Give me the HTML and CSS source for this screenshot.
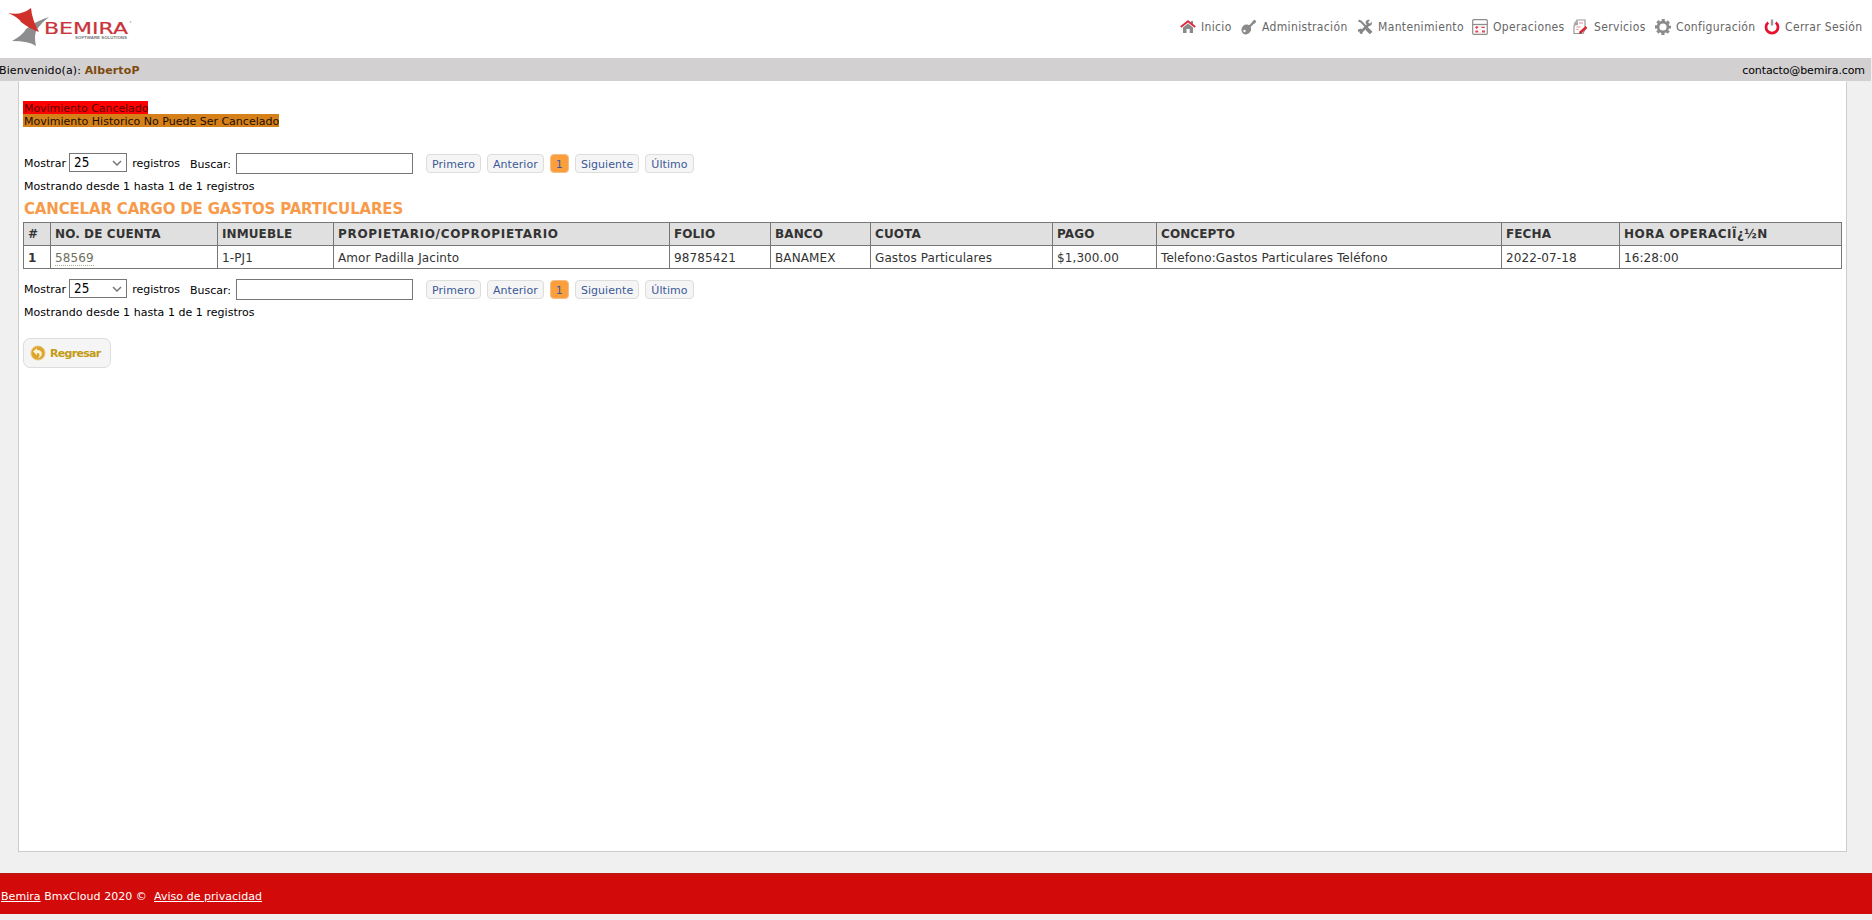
FILE: index.html
```
<!DOCTYPE html>
<html lang="es">
<head>
    <meta charset="UTF-8">
    <meta name="viewport" content="width=device-width, initial-scale=1.0">
    <title>Cancelar Cargo de Gastos Particulares</title>
    <link rel="stylesheet" href="styles.css">
</head>
<body>
    <header class="header">
        <svg class="logo" width="136" height="50" viewBox="0 0 136 50">
            <path d="M12 41 Q23 35 26 29 Q36 21 49 17 Q40 24 36 31 Q34 38 36 46 Q29 41 12 41Z" fill="#8d8d8f"/>
            <path d="M8 13 Q21 16 31 8 Q32 20 39 32 Q30 29 21 22 Q18 17 8 13Z" fill="#cf3029"/>
            <text class="logo-name" x="44" y="34" textLength="84" lengthAdjust="spacingAndGlyphs">BEMIRA</text>
            <text class="logo-sub" x="75" y="39" textLength="52" lengthAdjust="spacingAndGlyphs">SOFTWARE SOLUTIONS</text>
            <circle cx="130.500" cy="22" r="0.800" fill="#aaa"/>
        </svg>
        <nav class="menu">
            <a><svg viewBox="0 0 16 16"><path d="M3 8.500 8 4.500 13 8.500V14H9.700V10H6.500V14H3Z" fill="#8a8a8a"/><path d="M11 2h2v4h-2z" fill="#8a8a8a"/><path d="M.8 8 8 2.200 15.200 8" fill="none" stroke="#e0283c" stroke-width="1.900"/></svg><span>Inicio</span></a>
            <a><svg viewBox="0 0 16 16"><path d="M7 9 14.500 1.500" stroke="#8a8a8a" stroke-width="2.400"/><path d="M11 3h4M13 1v4" stroke="#8a8a8a" stroke-width="1"/><ellipse cx="5.200" cy="10.300" rx="4.600" ry="5.200" transform="rotate(35 5 10.500)" fill="#8a8a8a"/><circle cx="3.500" cy="12" r="1.200" fill="#fff"/></svg><span>Administración</span></a>
            <a><svg viewBox="0 0 16 16"><path d="M1.500 1.500 4 2.500 14.500 13.500" fill="none" stroke="#858585" stroke-width="2"/><path d="M9.500 9.500 14 14" stroke="#858585" stroke-width="3.300"/><path d="M3 14 11 6" stroke="#858585" stroke-width="2.500"/><path d="M14.800 2.800 12.800 4.800 11 3.200 13 1Q9 0 8.600 4L11.200 7.200Q15.800 7 14.800 2.800Z" fill="#858585"/><path d="M1 10.500 4 9.500 6 12 5 15 3.500 15 4 13.500 2.700 12.300 1 13Z" fill="#858585"/></svg><span>Mantenimiento</span></a>
            <a><svg viewBox="0 0 16 16"><rect x=".7" y=".7" width="14.600" height="14.600" rx="1" fill="#fff" stroke="#8d8d8d" stroke-width="1.200"/><path d="M1 5.500h14" stroke="#8d8d8d" stroke-width="1.300"/><path d="M3.300 8.300h3M4.800 6.900v3M9.300 8.300h3.500" stroke="#d94a5b" stroke-width="1.200"/><path d="M3.300 11.500h3v2h-3zM10 11.500h3v2h-3z" fill="#d94a5b"/><path d="M8 7v7" stroke="#e9a8b0" stroke-width=".8" stroke-dasharray="1 2"/></svg><span>Operaciones</span></a>
            <a><svg viewBox="0 0 16 16"><path d="M4 1h8v9.500l-2 4H1V7Z" fill="#fff" stroke="#9a9a9a" stroke-width="1.200"/><path d="M1 7V4l3-3 1 2v3Z" fill="#aaa"/><path d="M6 4h4M3.500 8h4M3.500 10.500h2" stroke="#e58a94" stroke-width="1.200"/><path d="M7 13.800 13.500 8" stroke="#dc2635" stroke-width="2.600"/><path d="m5.500 15 2-3 1.500 1.800Z" fill="#b32330"/></svg><span>Servicios</span></a>
            <a><svg viewBox="0 0 16 16"><circle cx="8" cy="8" r="4.900" fill="none" stroke="#8a8a8a" stroke-width="2.600"/><circle cx="8" cy="8" r="6.900" fill="none" stroke="#8a8a8a" stroke-width="2.200" stroke-dasharray="3.200 2.219" stroke-dashoffset="1.600"/></svg><span>Configuración</span></a>
            <a><svg viewBox="0 0 16 16"><path d="M4.200 3.500A6 6 0 1 0 11.800 3.500" fill="none" stroke="#e8112d" stroke-width="2.700"/><path d="M8 .5V6.500" stroke="#999" stroke-width="2.400"/></svg><span>Cerrar Sesión</span></a>
        </nav>
    </header>

    <div class="welcome-bar">
        <span class="user">Bienvenido(a): <b>AlbertoP</b></span>
        <span class="contact">contacto@bemira.com</span>
    </div>

    <main class="content">
        <div class="legend">
            <span class="cancelled">Movimiento Cancelado</span>
            <span class="historic">Movimiento Historico No Puede Ser Cancelado</span>
        </div>

        <div class="controls">
            <label class="length">Mostrar
                <span class="select-box"><select><option>25</option></select><svg width="10" height="6" viewBox="0 0 10 6"><path d="M1 1 5 5 9 1" fill="none" stroke="#777" stroke-width="1.500"/></svg></span>
                registros</label>
            <label class="search">Buscar: <input type="text"></label>
            <div class="paginate">
                <a>Primero</a><a>Anterior</a><a class="active">1</a><a>Siguiente</a><a>Último</a>
            </div>
        </div>
        <div class="info">Mostrando desde 1 hasta 1 de 1 registros</div>

        <h1>CANCELAR CARGO DE GASTOS PARTICULARES</h1>
        <table>
            <colgroup>
                <col class="c-num"><col class="c-cuenta"><col class="c-inmueble"><col class="c-propietario">
                <col class="c-folio"><col class="c-banco"><col class="c-cuota"><col class="c-pago">
                <col class="c-concepto"><col class="c-fecha"><col class="c-hora">
            </colgroup>
            <thead>
                <tr>
                    <th>#</th>
                    <th>NO. DE CUENTA</th>
                    <th>INMUEBLE</th>
                    <th class="owner">PROPIETARIO/COPROPIETARIO</th>
                    <th>FOLIO</th>
                    <th>BANCO</th>
                    <th>CUOTA</th>
                    <th>PAGO</th>
                    <th>CONCEPTO</th>
                    <th>FECHA</th>
                    <th class="hour">HORA OPERACIÏ¿½N</th>
                </tr>
            </thead>
            <tbody>
                <tr>
                    <td><b>1</b></td>
                    <td><a class="account">58569</a></td>
                    <td>1-PJ1</td>
                    <td>Amor Padilla Jacinto</td>
                    <td>98785421</td>
                    <td>BANAMEX</td>
                    <td>Gastos Particulares</td>
                    <td>$1,300.00</td>
                    <td>Telefono:Gastos Particulares Teléfono</td>
                    <td>2022-07-18</td>
                    <td>16:28:00</td>
                </tr>
            </tbody>
        </table>

        <div class="controls bottom">
            <label class="length">Mostrar
                <span class="select-box"><select><option>25</option></select><svg width="10" height="6" viewBox="0 0 10 6"><path d="M1 1 5 5 9 1" fill="none" stroke="#777" stroke-width="1.500"/></svg></span>
                registros</label>
            <label class="search">Buscar: <input type="text"></label>
            <div class="paginate">
                <a>Primero</a><a>Anterior</a><a class="active">1</a><a>Siguiente</a><a>Último</a>
            </div>
        </div>
        <div class="info">Mostrando desde 1 hasta 1 de 1 registros</div>

        <button class="back">
            <svg width="16" height="16" viewBox="0 0 16 16"><circle cx="8" cy="8" r="7" fill="#dca52c" stroke="#e8c67c" stroke-width="1"/><path d="M3 6.500 7 3v2q5 .2 4.800 4Q11.500 12 8 13q2-2 1.500-3.600Q9 8 7 8v2.200Z" fill="#fdf3d8"/></svg>
            Regresar
        </button>
    </main>

    <footer class="footer"><a>Bemira</a> BmxCloud 2020 © &nbsp;<a>Aviso de privacidad</a></footer>
</body>
</html>
```
FILE: styles.css
```
* {
    box-sizing: border-box;
}
body {
    margin: 0;
    height: 920px;
    overflow: hidden;
    background-color: #f0f0f0;
    font-family: Verdana, "DejaVu Sans", sans-serif;
    font-size: 11px;
    color: #000;
}
.header {
    display: flex;
    justify-content: space-between;
    height: 58px;
    background-color: #fff;
}
.logo-name {
    font-family: "DejaVu Sans", sans-serif;
    font-size: 15px;
    fill: #c9343a;
    stroke: #c9343a;
    stroke-width: 0.2px;
}
.logo-sub {
    font-family: "Liberation Sans", sans-serif;
    font-size: 4px;
    font-weight: bold;
    fill: #777;
}
.menu {
    display: grid;
    grid-template-columns: 61px 116px 115px 101px 82px 109px 108px;
    height: 53px;
    align-items: center;
}
.menu a {
    display: flex;
    align-items: center;
    gap: 5px;
    font-family: Tahoma, "DejaVu Sans Condensed", sans-serif;
    font-size: 12px;
    letter-spacing: 0.35px;
    color: #666;
    white-space: nowrap;
}
.menu svg {
    width: 16px;
    height: 16px;
    flex: none;
}

.welcome-bar {
    display: flex;
    justify-content: space-between;
    align-items: center;
    height: 23px;
    margin-right: 1px;
    padding: 1px 6px 0 0;
    background-color: #d2d0d1;
}
.user {
    margin-left: -1px;
    letter-spacing: 0.12px;
}
.user b {
    color: #7d4a0c;
}
.contact {
    letter-spacing: -0.1px;
}

.content {
    height: 771px;
    margin: 0 25px 0 18px;
    padding: 19px 4px 0;
    background-color: #fff;
    border: 1px solid #ccc;
    border-top: 1px solid #fff;
}
.legend {
    display: flex;
    flex-direction: column;
    align-items: flex-start;
}
.legend span {
    height: 13px;
    padding-left: 1px;
    line-height: 15px;
}
.cancelled {
    background-color: #f00;
    color: #5a0000;
    letter-spacing: -0.06px;
}
.historic {
    background-color: #d6801a;
    color: #1c1000;
}

.controls {
    display: flex;
    align-items: flex-start;
    height: 21px;
    margin-top: 26px;
    padding-left: 1px;
    line-height: 21px;
}
.controls.bottom {
    margin-top: 10px;
}
.length {
    display: flex;
    width: 166px;
    justify-content: space-between;
    padding-right: 10px;
}
.select-box {
    display: flex;
    align-items: center;
    width: 58px;
    height: 19px;
    margin: 0 1px 0 -1px;
    padding-right: 4px;
    border: 1px solid #767676;
}
select {
    appearance: none;
    flex: 1;
    min-width: 0;
    padding: 0 0 0 4px;
    border: 0;
    background: none;
    font-family: Tahoma, "DejaVu Sans Condensed", sans-serif;
    font-size: 13.3px;
}
.search {
    display: flex;
    justify-content: space-between;
    width: 223px;
    line-height: 23px;
}
input {
    width: 177px;
    height: 21px;
    border: 1px solid #767676;
    background-color: #fff;
}
.paginate {
    display: flex;
    gap: 6px;
    margin: 1px 0 0 13px;
}
.paginate a {
    height: 19px;
    padding: 0 5px;
    border: 1px solid #ddd;
    border-radius: 4px;
    background-color: #f5f5f5;
    color: #3b5998;
    letter-spacing: 0.06px;
    line-height: 19px;
}
.paginate .active {
    background-color: #fb9f3e;
    border-color: #f5bd80;
}
.info {
    margin-top: 6px;
    padding-left: 1px;
    letter-spacing: 0.04px;
    line-height: 14px;
}

h1 {
    margin: 7px 0 5px 1px;
    font-size: 15px;
    letter-spacing: -0.17px;
    line-height: 16px;
    color: #f79b4b;
    white-space: nowrap;
}
table {
    width: 1819px;
    table-layout: fixed;
    border-collapse: collapse;
    font-size: 12px;
    letter-spacing: 0.1px;
    color: #333;
}
th, td {
    height: 23px;
    padding: 0 4px;
    border: 1px solid #777;
    text-align: left;
    line-height: 16px;
    white-space: nowrap;
}
td {
    padding-top: 1px;
}
th {
    background-color: #e0e0e0;
}
.owner {
    letter-spacing: 0.68px;
}
.hour {
    letter-spacing: 0.5px;
}
.c-num { width: 27px; }
.c-cuenta { width: 167px; }
.c-inmueble { width: 116px; }
.c-propietario { width: 336px; }
.c-folio { width: 101px; }
.c-banco { width: 100px; }
.c-cuota { width: 182px; }
.c-pago { width: 104px; }
.c-concepto { width: 345px; }
.c-fecha { width: 118px; }
.account {
    color: #6f6f5c;
    border-bottom: 1px dotted #aaa88c;
}

.back {
    display: flex;
    align-items: center;
    gap: 4px;
    width: 88px;
    height: 30px;
    margin-top: 18px;
    padding: 0 6px;
    border: 1px solid #ddd;
    border-radius: 7px;
    background-color: #f5f5f5;
    font-family: Verdana, "DejaVu Sans", sans-serif;
    font-size: 11px;
    font-weight: bold;
    letter-spacing: -0.7px;
    color: #c39a13;
}
.back svg {
    flex: none;
}

.footer {
    height: 41px;
    margin-top: 21px;
    padding-left: 1px;
    border-top: 2px solid #bd1512;
    background-color: #d20a09;
    color: #fff;
    letter-spacing: 0.04px;
    line-height: 44px;
}
.footer a {
    text-decoration: underline;
}
```
